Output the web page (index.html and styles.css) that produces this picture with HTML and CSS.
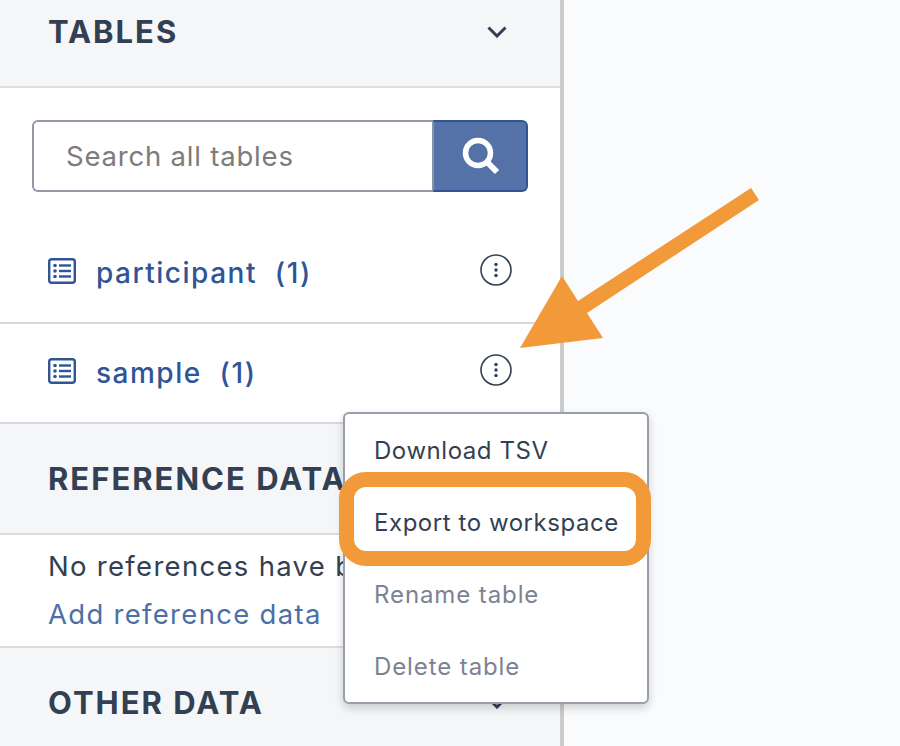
FILE: index.html
```html
<!DOCTYPE html>
<html lang="en">
<head>
<meta charset="utf-8">
<title>Tables</title>
<link rel="stylesheet" href="styles.css">
</head>
<body>
<div class="page">
  <aside class="sidebar">
    <div class="section-head first">
      <h2>TABLES</h2>
      <svg class="chev" width="20" height="12" viewBox="0 0 20 12"><path d="M1.5 1.5 10 10l8.5-8.5" fill="none" stroke="#333f52" stroke-width="3"/></svg>
    </div>
    <div class="search">
      <input class="search-input" type="text" placeholder="Search all tables">
      <button class="search-btn" aria-label="Search">
        <svg width="38" height="38" viewBox="0 0 38 38"><circle cx="16" cy="16" r="12.5" fill="none" stroke="#fff" stroke-width="5.5"/><path d="M25 25l10 10" stroke="#fff" stroke-width="6" fill="none"/></svg>
      </button>
    </div>
    <div class="row">
      <svg class="list-icon" width="28" height="26" viewBox="0 0 28 26"><rect x="1.2" y="1.2" width="25.6" height="23.6" rx="2.5" fill="none" stroke="#2f5596" stroke-width="2.4"/><g fill="#2f5596"><circle cx="7" cy="7.5" r="1.8"/><circle cx="7" cy="13" r="1.8"/><circle cx="7" cy="18.5" r="1.8"/><rect x="11" y="6.3" width="12" height="2.4"/><rect x="11" y="11.8" width="12" height="2.4"/><rect x="11" y="17.3" width="12" height="2.4"/></g></svg>
      <a class="row-name">participant&nbsp; (1)</a>
      <svg class="kebab" width="32" height="32" viewBox="0 0 32 32"><circle cx="16" cy="16" r="15" fill="none" stroke="#333f52" stroke-width="1.6"/><g fill="#333f52"><circle cx="16" cy="10.5" r="1.7"/><circle cx="16" cy="16" r="1.7"/><circle cx="16" cy="21.5" r="1.7"/></g></svg>
    </div>
    <div class="row">
      <svg class="list-icon" width="28" height="26" viewBox="0 0 28 26"><rect x="1.2" y="1.2" width="25.6" height="23.6" rx="2.5" fill="none" stroke="#2f5596" stroke-width="2.4"/><g fill="#2f5596"><circle cx="7" cy="7.5" r="1.8"/><circle cx="7" cy="13" r="1.8"/><circle cx="7" cy="18.5" r="1.8"/><rect x="11" y="6.3" width="12" height="2.4"/><rect x="11" y="11.8" width="12" height="2.4"/><rect x="11" y="17.3" width="12" height="2.4"/></g></svg>
      <a class="row-name">sample&nbsp; (1)</a>
      <svg class="kebab" width="32" height="32" viewBox="0 0 32 32"><circle cx="16" cy="16" r="15" fill="none" stroke="#333f52" stroke-width="1.6"/><g fill="#333f52"><circle cx="16" cy="10.5" r="1.7"/><circle cx="16" cy="16" r="1.7"/><circle cx="16" cy="21.5" r="1.7"/></g></svg>
    </div>
    <div class="section-head">
      <h2>REFERENCE DATA</h2>
    </div>
    <div class="ref-body">
      <p class="ref-text">No references have been</p>
      <a class="ref-link">Add reference data</a>
    </div>
    <div class="section-head">
      <h2>OTHER DATA</h2>
      <svg class="chev" width="20" height="12" viewBox="0 0 20 12"><path d="M1.5 1.5 10 10l8.5-8.5" fill="none" stroke="#333f52" stroke-width="3"/></svg>
    </div>
  </aside>
  <main class="content"></main>
</div>
<div class="menu">
  <div class="menu-item">Download TSV</div>
  <div class="menu-item">Export to workspace</div>
  <div class="menu-item disabled">Rename table</div>
  <div class="menu-item disabled">Delete table</div>
</div>
<div class="highlight"></div>
<svg class="arrow" width="900" height="746" viewBox="0 0 900 746"><polygon fill="#f2993a" points="751,188 759,200 587,313 603,338 520,348 562,276 578,301"/></svg>
</body>
</html>
```
FILE: styles.css
```css
* { box-sizing: border-box; }
html, body { margin: 0; height: 746px; overflow: hidden; }
body { font-family: Inter, "Open Sans", sans-serif; color: #333f52; background: #fafbfd; position: relative; }
.page { display: flex; height: 746px; overflow: hidden; }
.sidebar { width: 564px; flex: none; background: #fff; border-right: 4px solid #cccccc; overflow: hidden; }
.content { flex: 1; background: #fafbfd; }
.section-head { height: 111px; display: flex; align-items: center; justify-content: space-between; padding: 0 53px 0 48px; background: #f5f6f8; border-bottom: 2px solid #dcdde1; }
.section-head.first { margin-top: -23px; }
.section-head h2 { margin: 0; font-size: 31px; font-weight: 700; letter-spacing: 2px; white-space: nowrap; }
.chev { flex: none; }
.search { display: flex; padding: 32px 32px 32px; }
.search-input { width: 400px; height: 72px; border: 2px solid #9599a5; border-right: none; border-radius: 6px 0 0 6px; padding: 0 32px; font: 400 27.5px Inter, sans-serif; letter-spacing: 0.8px; outline: none; background: #fff; }
.search-input::placeholder { color: #7c7c7c; opacity: 1; }
.search-btn { width: 96px; height: 72px; border: 2px solid #2f5596; border-left: 2px solid #8a93a6; border-radius: 0 6px 6px 0; background: #5572a8; display: flex; align-items: center; justify-content: center; padding: 0 0 0 1px; }
.row { height: 100px; display: flex; align-items: center; padding: 0 48px; border-bottom: 2px solid #d8d8de; }
.row-name { margin-left: 20px; font-size: 28px; font-weight: 500; color: #2f5596; letter-spacing: 1.5px; flex: 1; }
.list-icon { flex: none; margin-top: -4px; }
.kebab { flex: none; margin-top: -6px; }
.ref-body { height: 113px; padding: 7px 48px 0; border-bottom: 2px solid #dcdde1; overflow: hidden; }
.ref-text { margin: 0; font-size: 27.5px; line-height: 48px; letter-spacing: 1.3px; white-space: nowrap; }
.ref-link { display: block; font-size: 27.5px; line-height: 48px; letter-spacing: 1.3px; color: #4d6fa8; white-space: nowrap; }
.menu { position: absolute; left: 343px; top: 412px; width: 306px; height: 292px; background: #fff; border: 2px solid #9a9eab; border-radius: 6px; box-shadow: 0 4px 10px rgba(0, 0, 0, 0.18); }
.menu-item { height: 72px; display: flex; align-items: center; padding-left: 29px; font-size: 24px; letter-spacing: 0.55px; color: #333f52; white-space: nowrap; }
.menu-item.disabled { color: #7b8392; letter-spacing: 0.9px; }
.highlight { position: absolute; left: 339px; top: 472px; width: 312px; height: 94px; border: 15px solid #f2993a; border-radius: 27px; }
.arrow { position: absolute; left: 0; top: 0; pointer-events: none; }
```
